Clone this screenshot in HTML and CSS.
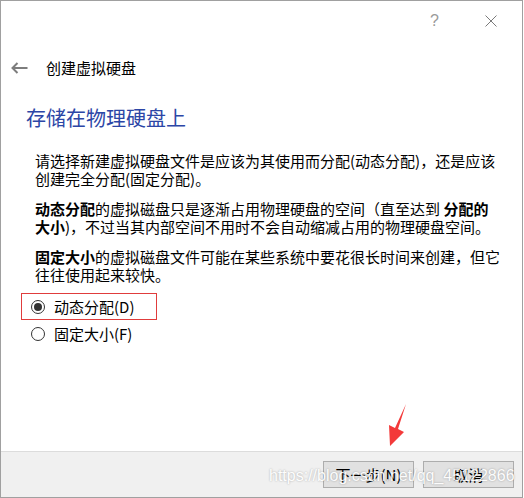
FILE: index.html
```html
<!DOCTYPE html>
<html lang="zh-CN">
<head>
  <meta charset="UTF-8">
  <meta name="viewport" content="width=device-width, initial-scale=1.0">
  <title>创建虚拟硬盘</title>
  <link rel="stylesheet" href="styles.css">
</head>
<body>
  <div class="window">
    <div class="titlebar">
      <span class="help">?</span>
      <span class="close">
        <svg width="12" height="12" viewBox="0 0 12 12"><path d="M0.5 0.5L11.5 11.5M11.5 0.5L0.5 11.5" stroke="#7a7a7a" stroke-width="1" fill="none"/></svg>
      </span>
    </div>

    <div class="header">
      <svg class="back" width="17" height="12" viewBox="0 0 17 12"><path d="M1.5 6H16.5M6.5 1L1.5 6L6.5 11" stroke="#7d7d7d" stroke-width="2" fill="none"/></svg>
      <span class="title">创建虚拟硬盘</span>
    </div>

    <h1 class="heading">存储在物理硬盘上</h1>

    <div class="intro">
      <p>请选择新建虚拟硬盘文件是应该为其使用而分配(动态分配)，还是应该<br>创建完全分配(固定分配)。</p>
      <p><b>动态分配</b>的虚拟磁盘只是逐渐占用物理硬盘的空间（直至达到 <b>分配的</b><br><b>大小</b>)，不过当其内部空间不用时不会自动缩减占用的物理硬盘空间。</p>
      <p><b>固定大小</b>的虚拟磁盘文件可能在某些系统中要花很长时间来创建，但它<br>往往使用起来较快。</p>
    </div>

    <div class="radios">
      <label class="radio focused"><span class="dot checked"></span>动态分配(D)</label>
      <label class="radio"><span class="dot"></span>固定大小(F)</label>
    </div>

    <div class="footer">
      <button class="btn">下一步(N)</button>
      <button class="btn">取消</button>
    </div>

    <svg class="mark" width="20" height="44" viewBox="0 0 20 44"><polygon points="19,0 11,25 17,28 3,42 2,21 8,24" fill="#f33a3a"/></svg>
    <div class="watermark">https://blog.csdn.net/qq_45122866</div>
  </div>
</body>
</html>
```

FILE: styles.css
```css
body {
  margin: 0;
  background-color: #fff;
  font-family: "Noto Sans CJK SC", sans-serif;
  color: #000;
}
.window {
  position: relative;
  width: 523px;
  height: 498px;
  box-sizing: border-box;
  border: 1px solid #a0a0a0;
  display: flex;
  flex-direction: column;
  background-color: #fff;
}
.titlebar {
  height: 39px;
  display: flex;
  justify-content: flex-end;
  align-items: center;
}
.help {
  font-family: "Liberation Sans", sans-serif;
  font-size: 16px;
  color: #9a9a9a;
  margin-right: 46px;
}
.close {
  display: flex;
  margin-right: 25px;
}
.header {
  height: 28px;
  margin-top: 13px;
  display: flex;
  align-items: center;
  padding-left: 10px;
}
.back {
  margin-top: 1px;
}
.title {
  font-size: 15px;
  margin-left: 18px;
}
.heading {
  margin: 25px 0 0 25px;
  font-size: 20px;
  font-weight: normal;
  line-height: 24px;
  color: #2c46a6;
}
.intro {
  margin: 22px 0 0 34px;
  font-size: 15px;
  line-height: 18px;
  white-space: nowrap;
}
.intro p {
  margin: 0 0 12px;
}
.intro b {
  font-weight: bold;
}
.radios {
  margin: -3px 0 0 20px;
  display: flex;
  flex-direction: column;
}
.radio {
  width: 136px;
  height: 27px;
  box-sizing: border-box;
  border: 1px solid transparent;
  display: flex;
  align-items: center;
  padding-left: 9px;
  font-size: 15px;
}
.radio.focused {
  border-color: #e03c3c;
}
.dot {
  width: 14px;
  height: 14px;
  box-sizing: border-box;
  border: 1px solid #333;
  border-radius: 50%;
  margin-right: 9px;
  display: flex;
  align-items: center;
  justify-content: center;
}
.dot.checked::after {
  content: "";
  width: 8px;
  height: 8px;
  border-radius: 50%;
  background-color: #333;
}
.footer {
  margin-top: auto;
  height: 46px;
  box-sizing: border-box;
  border-top: 1px solid #dcdcdc;
  background-color: #f0f0f0;
  display: flex;
  justify-content: flex-end;
  gap: 9px;
  padding: 9px 8px 0 0;
}
.btn {
  width: 91px;
  height: 27px;
  background-color: #e1e1e1;
  border: 1px solid #adadad;
  font-family: "Noto Sans CJK SC", sans-serif;
  font-size: 15px;
  color: #000;
  padding: 0;
}
.mark {
  position: absolute;
  left: 386px;
  top: 403px;
}
.watermark {
  position: absolute;
  left: 268px;
  top: 466px;
  font-family: "Liberation Sans", sans-serif;
  font-size: 16px;
  color: #fff;
  text-shadow: 0 0 2px rgba(0, 0, 0, 0.35);
  opacity: 0.9;
}
```
